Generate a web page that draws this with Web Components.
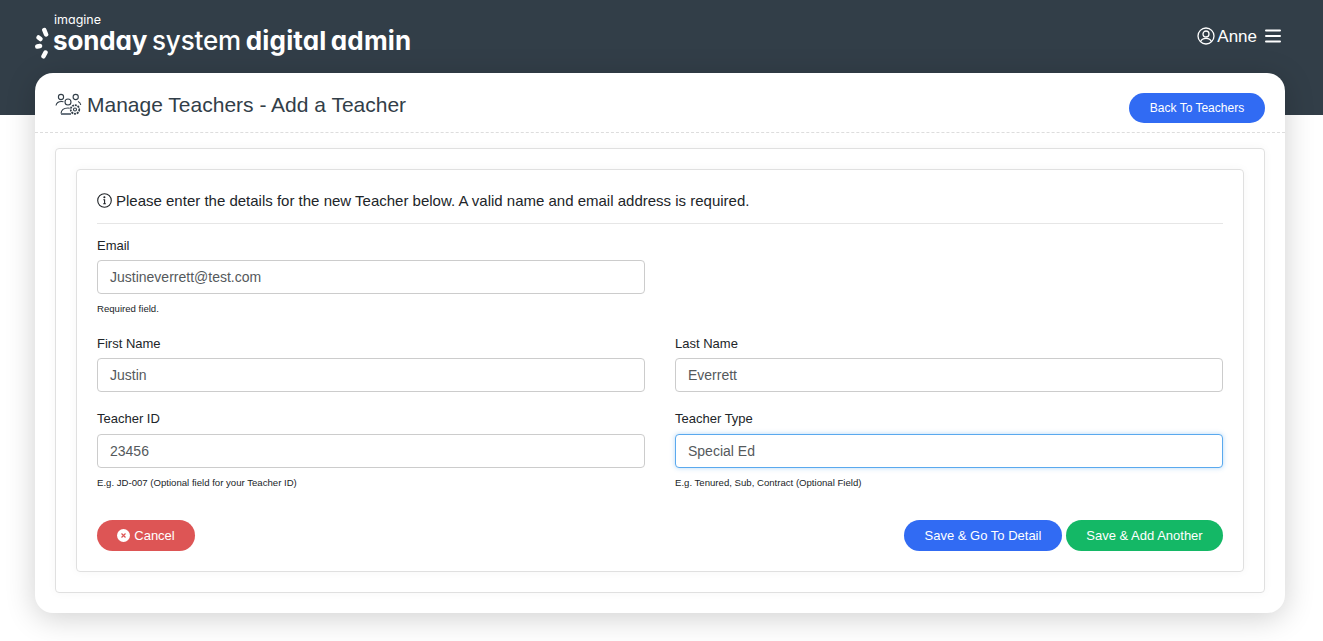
<!DOCTYPE html>
<html>
<head>
<meta charset="utf-8">
<title>Manage Teachers</title>
<style>
  html, body { margin: 0; height: 100%; background: #fff; overflow: hidden; }
  body { font-family: "Liberation Sans", Arial, sans-serif; color: #212529; }
</style>
</head>
<body>
<app-header user="Anne"></app-header>
<page-card heading="Manage Teachers - Add a Teacher">
  <pill-button slot="action" color="#316bf3" wide="136" small>Back To Teachers</pill-button>
  <teacher-form></teacher-form>
</page-card>

<script>
class AppHeader extends HTMLElement {
  connectedCallback() {
    const root = this.attachShadow({ mode: 'open' });
    root.innerHTML = `
      <style>
        :host { display: block; height: 115px; background: #323e48; color: #fff; box-sizing: border-box; padding: 13px 42px 0 35px; }
        .bar { display: flex; justify-content: space-between; align-items: flex-start; }
        .logo { display: flex; align-items: flex-start; }
        .logo svg { margin-top: 14px; flex: none; }
        .words { margin-left: 4px; font-family: Inter, sans-serif; font-feature-settings: "cv11"; line-height: 1; }
        .imagine { font-size: 12.500px; font-weight: 400; height: 12px; padding-top: 1px; margin-left: 1px; }
        .name { font-size: 26px; font-weight: 500; white-space: nowrap; margin-top: 2px; letter-spacing: -.15px; word-spacing: -2px; }
        .name b { font-weight: 700; }
        .name b + b { letter-spacing: .15px; }
        .user { display: flex; align-items: center; font-family: "Liberation Sans", sans-serif; font-size: 17px; margin-top: 14px; }
        .user svg { margin-bottom: 2px; }
        .user svg:first-child { margin-right: 2px; }
        .user svg:last-child { margin-left: 8px; }
      </style>
      <div class="bar">
        <div class="logo">
          <svg width="14" height="32" viewBox="0 0 14 32" fill="none" stroke="#fff" stroke-width="4.500" stroke-linecap="round">
            <path d="M9.300 3l1.800 4.500"/>
            <path d="M3.500 10.500l2 1.500"/>
            <path d="M2.300 19.500l2.700-.5"/>
            <path d="M10.500 25.500l-2 3.800"/>
          </svg>
          <div class="words">
            <div class="imagine">imagine</div>
            <div class="name"><b>sonday</b> system <b>digital admin</b></div>
          </div>
        </div>
        <div class="user">
          <svg width="18" height="18" viewBox="0 0 18 18" fill="none" stroke="#fff" stroke-width="1.3">
            <circle cx="9" cy="9" r="8"/>
            <circle cx="9" cy="7" r="3"/>
            <path d="M3.500 14.800c.8-2.400 2.800-3.400 5.500-3.400s4.700 1 5.500 3.400"/>
          </svg>
          <span>${this.getAttribute('user')}</span>
          <svg width="16" height="14" viewBox="0 0 16 14" stroke="#fff" stroke-width="2" stroke-linecap="round">
            <path d="M1 1.500h14M1 7h14M1 12.500h14"/>
          </svg>
        </div>
      </div>`;
  }
}
customElements.define('app-header', AppHeader);

const pageCardTemplate = document.createElement('template');
pageCardTemplate.innerHTML = `
  <style>
    :host { display: block; position: relative; margin: -42px 38px 0 35px; padding-bottom: 20px; background: #fff; border-radius: 18px; box-shadow: 0 5px 30px rgba(0,0,0,.19); }
    header { display: flex; justify-content: space-between; align-items: flex-start; height: 60px; box-sizing: border-box; padding: 20px 20px 0; border-bottom: 1px dashed #ddd; }
    .title { display: flex; align-items: center; font-size: 21px; color: #323e48; height: 24px; }
    .title svg { margin-right: 5px; }
    .outer { margin: 15px 20px 0; padding: 20px; border: 1px solid #e0e0e0; border-radius: 4px; box-shadow: 0 0 10px rgba(0,0,0,.04); }
  </style>
  <header>
    <div class="title">
      <svg width="27" height="24" viewBox="0 0 27 24" fill="none" stroke="#323e48" stroke-width="1.1">
        <circle cx="6" cy="4" r="2.600"/>
        <circle cx="20.700" cy="4" r="2.600"/>
        <circle cx="13" cy="9" r="3"/>
        <path d="M1 12.500c.5-2.500 2.500-4 5.500-4 .8 0 1.500.1 2 .3"/>
        <path d="M23 8.500c1.500.5 2.500 1.800 2.800 3.500"/>
        <path d="M6 20.500c.3-3.600 2.700-5.500 7-5.500 .6 0 1.200 .1 1.700 .2"/>
        <path d="M6 21h10" stroke="#6a7580" stroke-width="2"/>
        <circle cx="20" cy="16.500" r="4.300" stroke-width="1.700" stroke-dasharray="2 .8"/>
        <circle cx="20" cy="16.500" r="1.500"/>
      </svg>
      <span></span>
    </div>
    <slot name="action"></slot>
  </header>
  <div class="outer"><slot></slot></div>`;

class PageCard extends HTMLElement {
  connectedCallback() {
    const root = this.attachShadow({ mode: 'open' });
    root.appendChild(document.importNode(pageCardTemplate.content, true));
    root.querySelector('.title span').textContent = this.getAttribute('heading');
  }
}
customElements.define('page-card', PageCard);

class PillButton extends HTMLElement {
  connectedCallback() {
    const root = this.attachShadow({ mode: 'open' });
    root.innerHTML = `
      <style>
        :host { display: inline-flex; align-items: center; justify-content: center; box-sizing: border-box; height: 31px; border-radius: 16px; color: #fff; font-size: 13px; white-space: nowrap; background: ${this.getAttribute('color')}; width: ${this.getAttribute('wide')}px; }
        :host([small]) { font-size: 12px; height: 30px; }
        slot[name=icon]::slotted(*) { margin-right: 4px; }
      </style>
      <slot name="icon"></slot><slot></slot>`;
  }
}
customElements.define('pill-button', PillButton);

class FormField extends HTMLElement {
  connectedCallback() {
    const root = this.attachShadow({ mode: 'open' });
    const hint = this.getAttribute('hint');
    root.innerHTML = `
      <style>
        :host { display: block; min-width: 0; }
        label { display: block; font-size: 13px; line-height: 15px; margin-bottom: 7px; color: #212529; }
        :host(.row3) label { margin-bottom: 8px; }
        .box { box-sizing: border-box; height: 34px; border: 1px solid #ccc; border-radius: 4px; padding: 0 12px; display: flex; align-items: center; font-size: 14px; color: #55595c; background: #fff; }
        :host([focused]) .box { border-color: #5aa9ee; box-shadow: 0 0 5px rgba(90,169,238,.45); }
        .hint { font-size: 9.600px; line-height: 12px; margin-top: 9px; color: #212529; }
      </style>
      <label>${this.getAttribute('label')}</label>
      <div class="box">${this.getAttribute('value')}</div>
      ${hint ? `<div class="hint">${hint}</div>` : ''}`;
  }
}
customElements.define('form-field', FormField);

class TeacherForm extends HTMLElement {
  connectedCallback() {
    const root = this.attachShadow({ mode: 'open' });
    root.innerHTML = `
      <style>
        :host { display: block; border: 1px solid #e0e0e0; border-radius: 4px; padding: 20px; box-shadow: 0 0 10px rgba(0,0,0,.04); }
        .intro { display: flex; align-items: center; font-size: 15px; height: 21px; padding-bottom: 12px; border-bottom: 1px solid #e6e6e6; }
        .intro svg { margin-right: 4px; }
        .grid { display: grid; grid-template-columns: 1fr 1fr; column-gap: 30px; margin-top: 14px; }
        .row2 { margin-top: 21px; }
        .row3 { margin-top: 19px; }
        .actions { display: flex; justify-content: space-between; margin-top: 31px; }
        .right { display: flex; gap: 4px; }
      </style>
      <div class="intro">
        <svg width="15" height="15" viewBox="0 0 15 15" fill="none" stroke="#212529" stroke-width="1.100">
          <circle cx="7.500" cy="7.500" r="6.800"/>
          <path d="M6.300 6.700h1.300v4M6.200 10.800h2.700" />
          <circle cx="7.400" cy="4.300" r=".5" fill="#212529"/>
        </svg>
        <span>Please enter the details for the new Teacher below. A valid name and email address is required.</span>
      </div>
      <div class="grid">
        <form-field label="Email" value="Justineverrett@test.com" hint="Required field."></form-field>
        <div></div>
        <form-field class="row2" label="First Name" value="Justin"></form-field>
        <form-field class="row2" label="Last Name" value="Everrett"></form-field>
        <form-field class="row3" label="Teacher ID" value="23456" hint="E.g. JD-007 (Optional field for your Teacher ID)"></form-field>
        <form-field class="row3" focused label="Teacher Type" value="Special Ed" hint="E.g. Tenured, Sub, Contract (Optional Field)"></form-field>
      </div>
      <div class="actions">
        <pill-button color="#dd5555" wide="98">
          <svg slot="icon" width="13" height="13" viewBox="0 0 13 13"><circle cx="6.500" cy="6.500" r="6.500" fill="#fff"/><path d="M4.500 4.500l4 4M8.500 4.500l-4 4" stroke="#dd5555" stroke-width="1.200"/></svg>
          Cancel
        </pill-button>
        <div class="right">
          <pill-button color="#316bf3" wide="158">Save &amp; Go To Detail</pill-button>
          <pill-button color="#14b866" wide="157">Save &amp; Add Another</pill-button>
        </div>
      </div>`;
  }
}
customElements.define('teacher-form', TeacherForm);
</script>
</body>
</html>
